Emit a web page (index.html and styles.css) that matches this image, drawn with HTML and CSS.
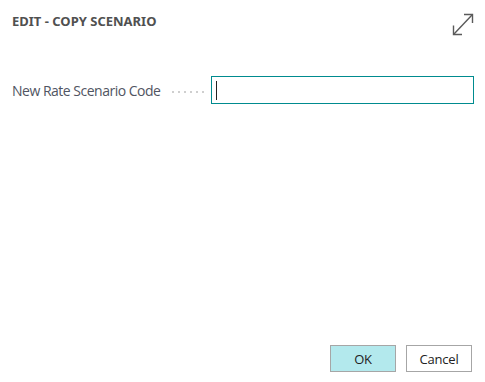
FILE: index.html
```html
<!DOCTYPE html>
<html>
<head>
<meta charset="utf-8">
<link rel="stylesheet" href="styles.css">
</head>
<body>
<div class="dialog">
  <div class="header">
    <div class="title">EDIT - COPY SCENARIO</div>
    <svg class="expand" width="22" height="24" viewBox="0 0 22 24">
      <path d="M2 22 L20 3" stroke="#5a5a5a" stroke-width="1.4" fill="none"/>
      <path d="M12 2.5 H20.5 V11" stroke="#5a5a5a" stroke-width="1.4" fill="none"/>
      <path d="M1.5 13.5 V22.5 H10" stroke="#5a5a5a" stroke-width="1.4" fill="none"/>
    </svg>
  </div>
  <div class="content">
    <div class="field">
      <label class="label">New Rate Scenario Code</label>
      <span class="leader"></span>
      <div class="input"><span class="caret"></span></div>
    </div>
  </div>
  <div class="footer">
    <button class="btn primary">OK</button>
    <button class="btn">Cancel</button>
  </div>
</div>
</body>
</html>
```

FILE: styles.css
```css
html, body {
  margin: 0;
  padding: 0;
  background: #ffffff;
}
.dialog {
  width: 485px;
  height: 382px;
  display: flex;
  flex-direction: column;
  box-sizing: border-box;
  font-family: "Open Sans", "Noto Sans", sans-serif;
}
.header {
  display: flex;
  justify-content: space-between;
  align-items: flex-start;
  padding: 12px 11px 0 12px;
}
.title {
  font-family: "Noto Sans", sans-serif;
  font-weight: 700;
  font-size: 13px;
  color: #505050;
  line-height: 17px;
  padding-top: 1px;
}
.content {
  padding: 40px 11px 0 12px;
}
.field {
  display: flex;
  align-items: center;
}
.label {
  font-size: 14px;
  color: #505562;
  white-space: nowrap;
  flex: none;
  letter-spacing: -0.5px;
}
.leader {
  width: 34px;
  height: 2px;
  margin: 4px 5px 0 12px;
  flex: none;
  background-image: linear-gradient(to right, #cfcfcf 0 2px, transparent 2px);
  background-size: 6px 2px;
  background-repeat: repeat-x;
}
.input {
  flex: 1;
  height: 28px;
  box-sizing: border-box;
  border: 1px solid #008b8f;
  display: flex;
  align-items: center;
  padding-left: 4px;
}
.caret {
  width: 1px;
  height: 19px;
  background: #222;
}
.footer {
  margin-top: auto;
  display: flex;
  justify-content: flex-end;
  gap: 10px;
  padding: 0 13px 10px 0;
}
.btn {
  height: 27px;
  width: 66px;
  box-sizing: border-box;
  border: 1px solid #a6a6a6;
  background: #ffffff;
  font-family: "Open Sans", sans-serif;
  font-size: 13px;
  color: #222;
  padding: 0;
  letter-spacing: -0.2px;
}
.btn.primary {
  background: #b3e9ed;
}
```
